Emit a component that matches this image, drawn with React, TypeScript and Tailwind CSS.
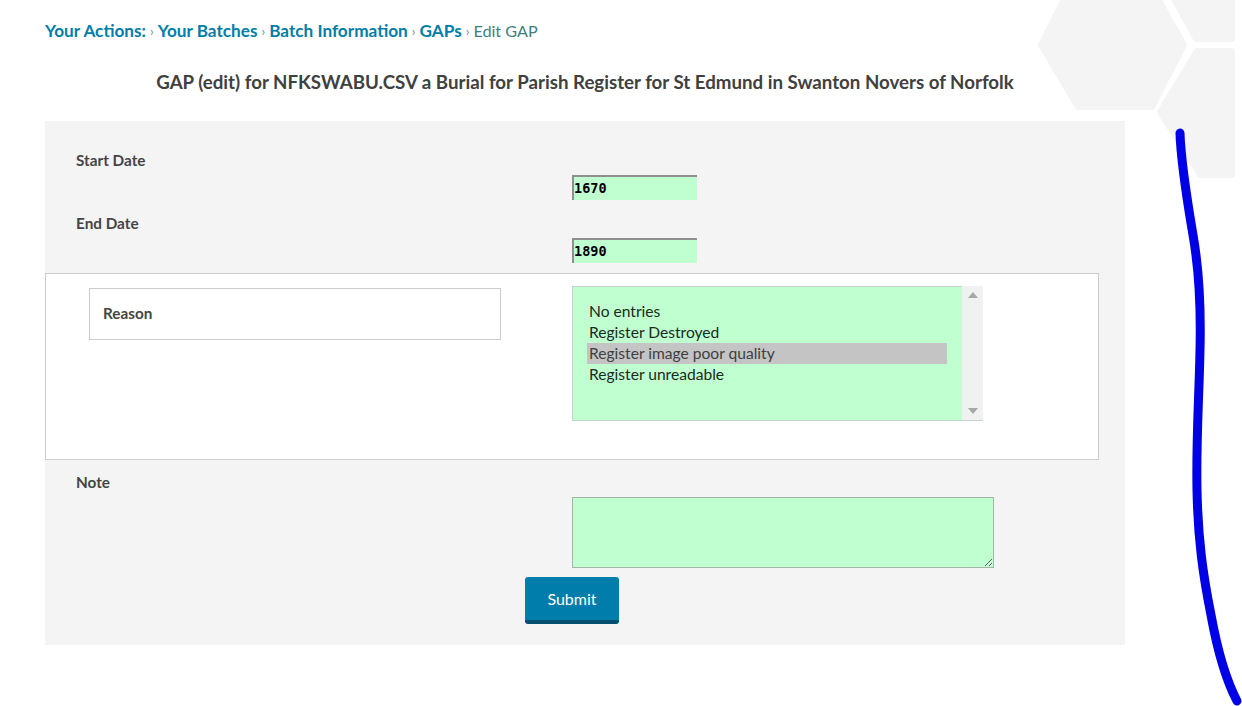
const fontClass = "font-['Lato','Noto_Sans',sans-serif]";

const crumbs = ["Your Actions:", "Your Batches", "Batch Information", "GAPs"];
const reasons = ["No entries", "Register Destroyed", "Register image poor quality", "Register unreadable"];

function Decoration() {
  return (
    <svg className="absolute left-0 top-0 pointer-events-none" width="1242" height="706" viewBox="0 0 1242 706" fill="none">
      <g fill="#f4f4f4" stroke="#f4f4f4" strokeWidth="6" strokeLinejoin="round">
        <path d="M1066 -5 L1041 45 L1078 107 L1152 107 L1184 45 L1156 -5 Z" />
        <path d="M1172 -5 L1196 39 L1232 39 L1232 -5 Z" />
        <path d="M1197 51 L1160 112 L1200 175 L1232 175 L1232 51 Z" />
      </g>
      <path
        d="M1180 133 C1181 165 1188 205 1193 235 C1200 275 1201 310 1200 350 C1199 400 1196 440 1197 490 C1198 540 1203 575 1211 615 C1217 648 1226 680 1237 701"
        stroke="#0000e6"
        strokeWidth="9"
        strokeLinecap="round"
      />
    </svg>
  );
}

function Label({ children }: { children: React.ReactNode }) {
  return <div className="h-[22px] pl-[31px] text-[15.3px] leading-[22px] font-bold text-[#454545]">{children}</div>;
}

function YearInput({ value }: { value: string }) {
  return (
    <input
      readOnly
      value={value}
      className="block h-[25px] w-[125px] border-t-2 border-l-2 border-t-[#8f8f8f] border-l-[#8f8f8f] bg-[#c0ffd0] pb-[1px] font-['DejaVu_Sans_Mono',monospace] text-[13.5px] font-bold text-black outline-none"
    />
  );
}

function ReasonList() {
  return (
    <div className="flex h-[135px] w-[411px] border-b border-[#c4d4c8]">
      <div className="flex-1 border-l border-t border-[#c4d4c8] bg-[#c0ffd0] px-[14px] pt-[14px]">
        {reasons.map((reason, index) => (
          <div
            key={reason}
            className={`h-[21px] w-[360px] pl-[2px] text-[15.6px] leading-[21px] ${
              index === 2 ? "bg-[#c4c4c4] text-[#404040]" : "text-[#1a2a20]"
            }`}
          >
            {reason}
          </div>
        ))}
      </div>
      <div className="flex w-[21px] flex-col items-center justify-between bg-[#f1f1f1] py-[6px]">
        <span className="h-0 w-0 border-x-[5px] border-b-[6px] border-x-transparent border-b-[#a8a8a8]" />
        <span className="h-0 w-0 border-x-[5px] border-t-[6px] border-x-transparent border-t-[#a8a8a8]" />
      </div>
    </div>
  );
}

export default function App() {
  return (
    <div className={`relative h-[706px] w-[1242px] overflow-hidden bg-white ${fontClass}`}>
      <Decoration />
      <div className="relative pl-[45px] pt-[20px]">
        <nav className="flex h-[22px] items-center text-[17.2px] leading-[22px]">
          {crumbs.map((crumb) => (
            <span key={crumb} className="flex items-center">
              <span className="font-bold text-[#007ea6]">{crumb}</span>
              <span className="mx-[4px] text-[13px] text-[#6b8f96]">›</span>
            </span>
          ))}
          <span className="text-[16.2px] text-[#3d7f80]">Edit GAP</span>
        </nav>

        <h1 className="mt-[27px] w-[1080px] text-center text-[18.7px] leading-[26px] font-bold text-[#404040]">
          GAP (edit) for NFKSWABU.CSV a Burial for Parish Register for St Edmund in Swanton Novers of Norfolk
        </h1>

        <form className="mt-[26px] h-[524px] w-[1080px] bg-[#f4f4f4] pt-[28px]">
          <Label>Start Date</Label>
          <div className="mt-[4px] pl-[527px]">
            <YearInput value="1670" />
          </div>
          <div className="mt-[12px]">
            <Label>End Date</Label>
          </div>
          <div className="mt-[4px] pl-[527px]">
            <YearInput value="1890" />
          </div>

          <div className="mt-[10px] flex h-[187px] w-[1054px] border border-[#cccccc] bg-white pl-[43px] pt-[12px]">
            <div className="mt-[2px] flex h-[52px] w-[412px] items-center border border-[#cccccc] pb-[1px] pl-[13px] text-[15.3px] font-bold text-[#454545]">
              Reason
            </div>
            <div className="ml-[71px]">
              <ReasonList />
            </div>
          </div>

          <div className="mt-[11px]">
            <Label>Note</Label>
          </div>
          <div className="mt-[4px] pl-[527px]">
            <textarea
              readOnly
              className="block h-[71px] w-[422px] border border-[#a3b5a8] bg-[#c0ffd0] outline-none"
            />
          </div>
          <div className="mt-[9px] pl-[480px]">
            <button
              type="button"
              className="h-[47px] w-[94px] rounded-[3px] border-b-[4px] border-b-[#004f70] bg-[#007dab] text-[16px] text-white"
            >
              Submit
            </button>
          </div>
        </form>
      </div>
    </div>
  );
}
